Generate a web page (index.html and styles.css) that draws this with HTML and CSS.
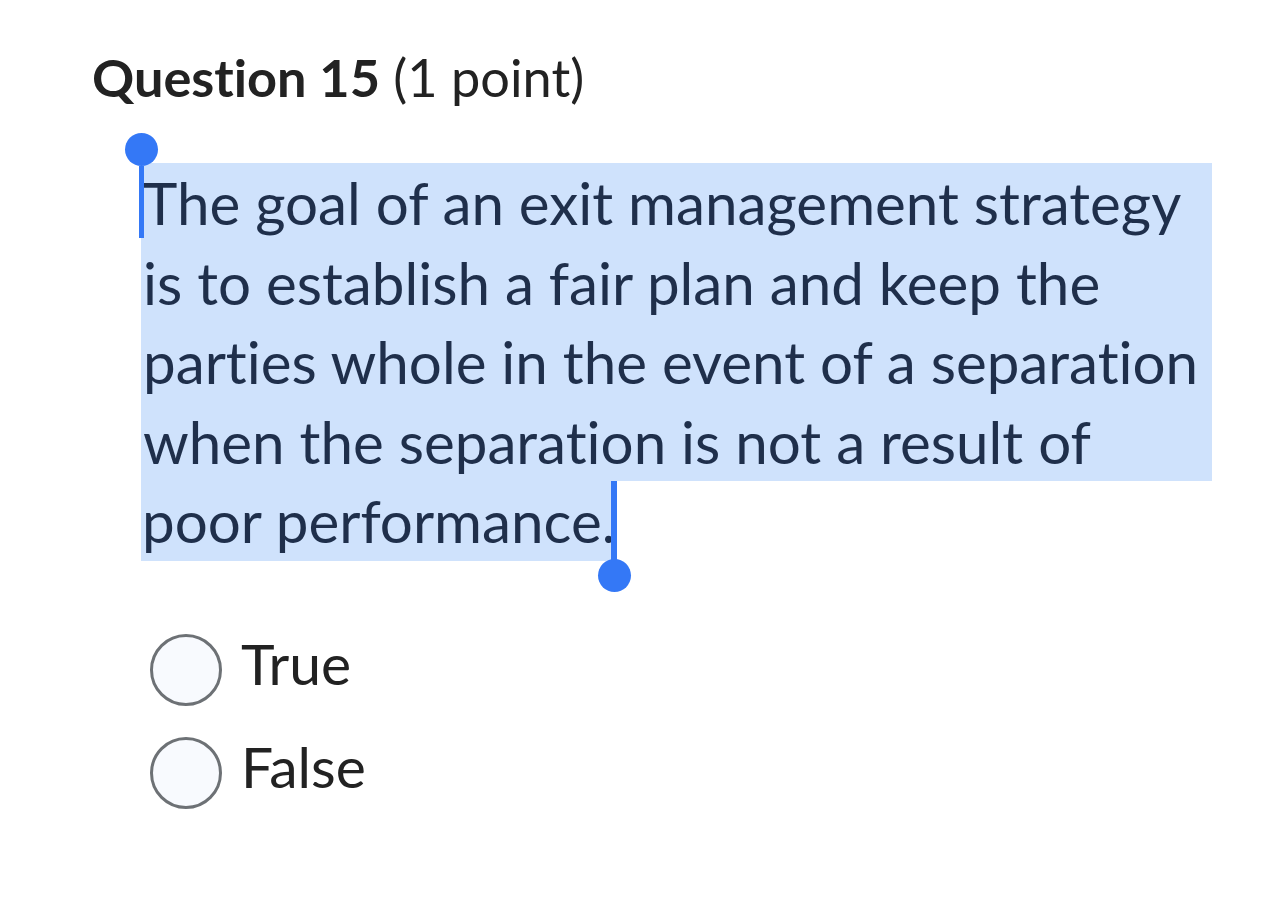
FILE: index.html
```html
<!DOCTYPE html>
<html lang="en">
<head>
<meta charset="utf-8">
<title>Question 15</title>
<link rel="stylesheet" href="styles.css">
</head>
<body>
<main class="quiz">
  <h2 class="q-title"><strong>Quest&zwnj;ion 15</strong> (1 point)</h2>
  <div class="passage">
    <div class="sel-full">The goal of an exit management strategy is to establish a fair plan and keep the part&zwnj;ies whole in the event of a separat&zwnj;ion when the separat&zwnj;ion is not a result of</div>
    <div class="sel-last"><span class="sel-tail">poor performance.</span><span class="handle-end"></span></div>
    <span class="handle-start"></span>
  </div>
  <ul class="options">
    <li class="option"><span class="radio"></span><span class="opt-label">True</span></li>
    <li class="option"><span class="radio"></span><span class="opt-label">False</span></li>
  </ul>
</main>
</body>
</html>
```

FILE: styles.css
```css
html, body {
  margin: 0;
  padding: 0;
  background: #ffffff;
}
body {
  font-family: Lato, "Open Sans", "Liberation Sans", sans-serif;
  font-variant-ligatures: none;
  font-feature-settings: "liga" 0, "clig" 0, "dlig" 0;
}
.quiz {
  padding: 47px 0 0 92px;
  display: flex;
  flex-direction: column;
}
.q-title {
  margin: 0;
  font-size: 52.3px;
  line-height: 60px;
  font-weight: 400;
  color: #222222;
}
.q-title strong {
  font-weight: 700;
}
.passage {
  position: relative;
  margin: 56px 0 0 49px;
  width: 1071px;
  font-size: 58.3px;
  line-height: 79.6px;
  color: #1f2f4b;
}
.sel-full {
  background: #cfe2fc;
  padding-left: 2px;
}
.sel-last {
  position: relative;
  display: flex;
}
.sel-tail {
  background: #cfe2fc;
  padding-left: 1px;
  padding-right: 0;
}
.handle-start {
  position: absolute;
  left: -2px;
  top: 3px;
  width: 5px;
  height: 72px;
  background: #3478f6;
}
.handle-start::before {
  content: "";
  position: absolute;
  left: -14px;
  top: -33px;
  width: 33px;
  height: 33px;
  border-radius: 50%;
  background: #3478f6;
}
.handle-end {
  position: relative;
  width: 6px;
  height: 80px;
  margin-left: -4px;
  background: #3478f6;
}
.handle-end::after {
  content: "";
  position: absolute;
  left: -13.5px;
  top: 78px;
  width: 33px;
  height: 33px;
  border-radius: 50%;
  background: #3478f6;
}
.options {
  list-style: none;
  margin: 73px 0 0 58px;
  padding: 0;
  display: flex;
  flex-direction: column;
  gap: 31px;
}
.option {
  display: flex;
  align-items: center;
  gap: 19px;
}
.radio {
  width: 66px;
  height: 66px;
  border: 3px solid #6d7175;
  border-radius: 50%;
  background: #f8fafe;
  flex: none;
}
.opt-label {
  font-size: 57px;
  line-height: 72px;
  color: #222222;
  margin-top: -14px;
}
```
